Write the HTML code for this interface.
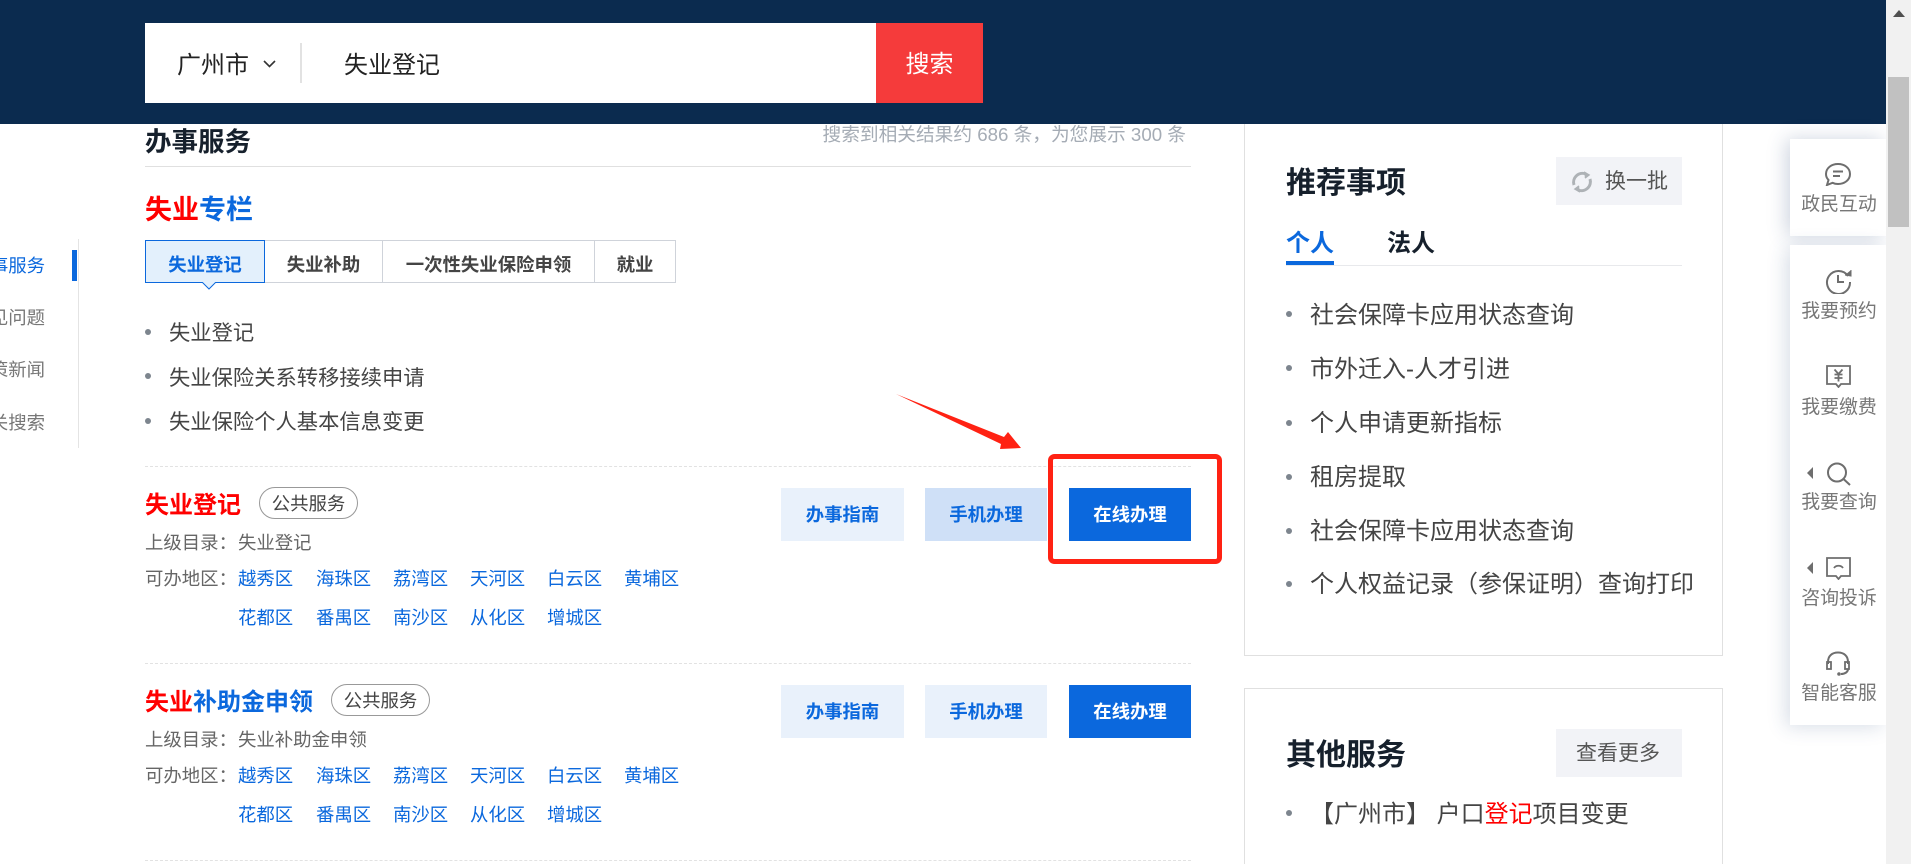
<!DOCTYPE html>
<html lang="zh"><head><meta charset="utf-8"><title>失业登记</title>
<style>
html,body{margin:0;padding:0;background:#fff;width:1911px;height:864px;overflow:hidden}
body{position:relative;font-family:"Liberation Sans","Noto Sans CJK SC",sans-serif}
.a{position:absolute;white-space:nowrap}
.t{position:absolute;white-space:nowrap;height:40px;line-height:40px}
.b{font-weight:700}
.r{color:#f00}.bl{color:#0b68dd}
.li{font-size:21.3px;color:#444}
.rl{font-size:24px;color:#444}
.dot{position:absolute;width:6px;height:6px;border-radius:50%;background:#7d858e}
.dash{position:absolute;left:145px;width:1046px;border-top:1px dashed #e2e2e2;height:0}
.m{font-size:18.4px;color:#666}
.l{font-size:18.4px;color:#0b68dd}
.pill{position:absolute;box-sizing:border-box;border:1px solid #999;border-radius:16px;height:32px;line-height:31px;text-align:center;font-size:18.4px;color:#444}
.btn{position:absolute;width:122px;height:53px;line-height:54px;text-align:center;font-size:18.4px;font-weight:700;background:#e9f1fb;color:#0b68dd}
.card{position:absolute;left:1244px;width:479px;box-sizing:border-box;border:1px solid #e0e0e0;background:#fff}
.gb{position:absolute;left:1556px;width:126px;height:48px;background:#f2f3f7;color:#555;font-size:21px;line-height:50px}
.tab{position:absolute;top:240px;height:43px;box-sizing:border-box;border:1px solid #cfd3da;border-left:0;line-height:47px;text-align:center;font-size:18.4px;font-weight:700;color:#444}
.st{position:absolute;left:1791px;width:96px;text-align:center;font-size:18.9px;color:#777;height:30px;line-height:30px}
.ic{position:absolute;left:1790px;width:96px}
</style></head><body>

<!-- left nav -->
<div class="a" style="left:78px;top:239px;width:1px;height:209px;background:#e4e4e4"></div>
<div class="a" style="left:72px;top:250px;width:5px;height:31px;background:#0b68dd"></div>
<div class="t" style="right:1866px;top:246px;font-size:18.4px;color:#0b68dd">办事服务</div>
<div class="t" style="right:1866px;top:298px;font-size:18.4px;color:#777">常见问题</div>
<div class="t" style="right:1866px;top:350px;font-size:18.4px;color:#777">政策新闻</div>
<div class="t" style="right:1866px;top:403px;font-size:18.4px;color:#777">相关搜索</div>

<!-- main -->
<div class="t" style="right:725px;top:115px;font-size:18.7px;color:#a5acb5">搜索到相关结果约 686 条，为您展示 300 条</div>
<div class="t b" style="left:145px;top:122px;font-size:26.5px;color:#16202c">办事服务</div>
<div class="a" style="left:145px;top:166px;width:1046px;height:1px;background:#e0e0e0"></div>
<div class="t b" style="left:145px;top:190px;font-size:27px;color:#0b68dd"><span class="r">失业</span>专栏</div>

<div class="tab" style="left:265px;width:118px">失业补助</div>
<div class="tab" style="left:383px;width:212px">一次性失业保险申领</div>
<div class="tab" style="left:595px;width:81px">就业</div>
<div class="a b" style="left:145px;top:240px;width:120px;height:43px;box-sizing:border-box;border:1px solid #0b68dd;background:#e3f0fc;color:#0b68dd;font-size:18.4px;text-align:center;line-height:47px">失业登记</div>
<svg class="a" style="left:201px;top:282px" width="16" height="8" viewBox="0 0 16 8"><path d="M1 0 L8 7 L15 0" fill="#e3f0fc" stroke="#0b68dd" stroke-width="1"/></svg>

<div class="dot" style="left:145px;top:329px"></div><div class="t li" style="left:169px;top:313px">失业登记</div>
<div class="dot" style="left:145px;top:373px"></div><div class="t li" style="left:169px;top:358px">失业保险关系转移接续申请</div>
<div class="dot" style="left:145px;top:418px"></div><div class="t li" style="left:169px;top:402px">失业保险个人基本信息变更</div>

<div class="dash" style="top:466px"></div>
<div class="t b r" style="left:145px;top:486px;font-size:24px">失业登记</div>
<div class="pill" style="left:259px;top:487px;width:99px">公共服务</div>
<div class="t m" style="left:145px;top:523px">上级目录：<span style="margin-left:1px">失业登记</span></div>
<div class="t m" style="left:145px;top:559px">可办地区：</div>
<div class="t l" style="left:238px;top:559px">越秀区</div><div class="t l" style="left:316px;top:559px">海珠区</div><div class="t l" style="left:393px;top:559px">荔湾区</div><div class="t l" style="left:470px;top:559px">天河区</div><div class="t l" style="left:547px;top:559px">白云区</div><div class="t l" style="left:624px;top:559px">黄埔区</div>
<div class="t l" style="left:238px;top:598px">花都区</div><div class="t l" style="left:316px;top:598px">番禺区</div><div class="t l" style="left:393px;top:598px">南沙区</div><div class="t l" style="left:470px;top:598px">从化区</div><div class="t l" style="left:547px;top:598px">增城区</div>
<div class="btn" style="left:781px;top:488px;width:123px">办事指南</div>
<div class="btn" style="left:925px;top:488px;background:#cfe0f7">手机办理</div>
<div class="btn" style="left:1069px;top:488px;background:#0b68dd;color:#fff">在线办理</div>

<div class="dash" style="top:663px"></div>
<div class="t b bl" style="left:145px;top:683px;font-size:24px"><span class="r">失业</span>补助金申领</div>
<div class="pill" style="left:331px;top:684px;width:99px">公共服务</div>
<div class="t m" style="left:145px;top:720px">上级目录：<span style="margin-left:1px">失业补助金申领</span></div>
<div class="t m" style="left:145px;top:756px">可办地区：</div>
<div class="t l" style="left:238px;top:756px">越秀区</div><div class="t l" style="left:316px;top:756px">海珠区</div><div class="t l" style="left:393px;top:756px">荔湾区</div><div class="t l" style="left:470px;top:756px">天河区</div><div class="t l" style="left:547px;top:756px">白云区</div><div class="t l" style="left:624px;top:756px">黄埔区</div>
<div class="t l" style="left:238px;top:795px">花都区</div><div class="t l" style="left:316px;top:795px">番禺区</div><div class="t l" style="left:393px;top:795px">南沙区</div><div class="t l" style="left:470px;top:795px">从化区</div><div class="t l" style="left:547px;top:795px">增城区</div>
<div class="btn" style="left:781px;top:685px;width:123px">办事指南</div>
<div class="btn" style="left:925px;top:685px">手机办理</div>
<div class="btn" style="left:1069px;top:685px;background:#0b68dd;color:#fff">在线办理</div>
<div class="dash" style="top:860px"></div>

<!-- annotation -->
<svg class="a" style="left:890px;top:390px" width="340" height="180" viewBox="890 390 340 180">
<path d="M896 394 L1004 437 L1008 432 L1021 448 L1000 449 L1001 444 Z" fill="#ff2213"/>
<rect x="1050.5" y="456.5" width="169" height="105" rx="4" fill="none" stroke="#ff2213" stroke-width="5"/>
</svg>

<!-- right cards -->
<div class="card" style="top:100px;height:556px"></div>
<div class="t b" style="left:1286px;top:164px;font-size:30px;color:#16202c">推荐事项</div>
<div class="gb" style="top:157px"><span class="a" style="left:49px;top:0">换一批</span>
<svg class="a" style="left:15px;top:14px" width="22" height="22" viewBox="0 0 22 22" fill="none" stroke="#aeb2b6" stroke-width="3"><path d="M3 14 A9 9 0 0 1 15 3"/><path d="M19 8 A9 9 0 0 1 7 19"/><path d="M13 1 L18 4 L14 7" stroke-width="1.5" fill="#aeb2b6"/><path d="M9 21 L4 18 L8 15" stroke-width="1.5" fill="#aeb2b6"/></svg></div>
<div class="t b bl" style="left:1286px;top:224px;font-size:24px">个人</div>
<div class="t b" style="left:1387px;top:224px;font-size:24px;color:#16202c">法人</div>
<div class="a" style="left:1286px;top:265px;width:396px;height:1px;background:#e8e9ec"></div>
<div class="a" style="left:1286px;top:261px;width:48px;height:4px;background:#0b68dd"></div>

<div class="dot" style="left:1286px;top:311px"></div><div class="t rl" style="left:1310px;top:296px">社会保障卡应用状态查询</div>
<div class="dot" style="left:1286px;top:365px"></div><div class="t rl" style="left:1310px;top:350px">市外迁入-人才引进</div>
<div class="dot" style="left:1286px;top:420px"></div><div class="t rl" style="left:1310px;top:404px">个人申请更新指标</div>
<div class="dot" style="left:1286px;top:474px"></div><div class="t rl" style="left:1310px;top:458px">租房提取</div>
<div class="dot" style="left:1286px;top:528px"></div><div class="t rl" style="left:1310px;top:512px">社会保障卡应用状态查询</div>
<div class="dot" style="left:1286px;top:581px"></div><div class="t rl" style="left:1310px;top:565px">个人权益记录（参保证明）查询打印</div>

<div class="card" style="top:688px;height:190px"></div>
<div class="t b" style="left:1286px;top:736px;font-size:30px;color:#16202c">其他服务</div>
<div class="gb" style="top:729px;text-align:center;text-indent:-2px">查看更多</div>
<div class="dot" style="left:1286px;top:810px"></div><div class="t rl" style="left:1310px;top:795px">【广州市】 户口<span class="r">登记</span>项目变更</div>

<!-- header -->
<div class="a" style="left:0;top:0;width:1886px;height:124px;background:#0b2b4f"></div>
<div class="a" style="left:145px;top:23px;width:731px;height:80px;background:#fff"></div>
<div class="a" style="left:876px;top:23px;width:107px;height:80px;background:#f53b3b;color:#fff;font-size:24px;line-height:84px;text-align:center">搜索</div>
<div class="t" style="left:177px;top:46px;font-size:24px;color:#222">广州市</div>
<svg class="a" style="left:263px;top:60px" width="13" height="8" viewBox="0 0 13 8"><path d="M1 1 L6.5 6.5 L12 1" fill="none" stroke="#333" stroke-width="1.6"/></svg>
<div class="a" style="left:300px;top:43px;width:2px;height:40px;background:#e2e2e2"></div>
<div class="t" style="left:344px;top:46px;font-size:24px;color:#222">失业登记</div>

<!-- scrollbar -->
<div class="a" style="left:1886px;top:0;width:25px;height:864px;background:#f1f1f1"></div>
<svg class="a" style="left:1893px;top:10px" width="12" height="7" viewBox="0 0 12 7"><path d="M6 0 L12 7 L0 7 Z" fill="#505050"/></svg>
<div class="a" style="left:1888px;top:77px;width:21px;height:150px;background:#c1c1c1"></div>

<!-- side widget -->
<div class="a" style="left:1790px;top:139px;width:96px;height:97px;background:#fff;box-shadow:-4px 0 18px rgba(40,70,120,.22)"></div>
<div class="a" style="left:1790px;top:245px;width:96px;height:480px;background:#fff;box-shadow:-4px 2px 18px rgba(40,70,120,.18)"></div>
<div class="a" style="left:1886px;top:124px;width:25px;height:740px;background:#f1f1f1"></div>
<div class="a" style="left:1888px;top:124px;width:21px;height:103px;background:#c1c1c1"></div>

<svg class="ic" style="top:162px" width="96" height="24" viewBox="0 0 96 24" fill="none" stroke="#6e6e6e" stroke-width="2"><path d="M48 2 C54.5 2 60 6 60 12 C60 18 54.5 22 48 22 C46 22 44 21.5 42.5 20.8 L37 23 L38.5 18 C36.8 16.3 36 14.3 36 12 C36 6 41.5 2 48 2 Z"/><path d="M43 9.5 H53 M43 14 H50"/></svg>
<div class="st" style="top:190px">政民互动</div>

<svg class="ic" style="top:268px" width="96" height="26" viewBox="0 0 96 26" fill="none" stroke="#6e6e6e" stroke-width="2"><path d="M58 8 A11.5 11.5 0 1 0 60 14"/><path d="M55 7 L61 8 L61 2" fill="#6e6e6e" stroke-width="1"/><path d="M48 7 V14 H54"/></svg>
<div class="st" style="top:297px">我要预约</div>

<svg class="ic" style="top:365px" width="96" height="23" viewBox="0 0 96 23" fill="none" stroke="#6e6e6e" stroke-width="1.8"><path d="M37 1 H60 V19 H51 L48.5 22 L46 19 H37 Z"/><path d="M44.5 4.5 L48.5 9 L52.5 4.5 M44.5 9.5 H52.5 M44.5 13 H52.5 M48.5 9 V16.5"/></svg>
<div class="st" style="top:393px">我要缴费</div>

<svg class="a" style="left:1807px;top:467px" width="6" height="12" viewBox="0 0 6 12"><path d="M6 0 V12 L0 6 Z" fill="#6e6e6e"/></svg>
<svg class="ic" style="top:462px" width="96" height="24" viewBox="0 0 96 24" fill="none" stroke="#6e6e6e" stroke-width="2"><circle cx="47" cy="10.5" r="9"/><path d="M53.5 17 L60 23"/></svg>
<div class="st" style="top:488px">我要查询</div>

<svg class="a" style="left:1807px;top:562px" width="6" height="12" viewBox="0 0 6 12"><path d="M6 0 V12 L0 6 Z" fill="#6e6e6e"/></svg>
<svg class="ic" style="top:557px" width="96" height="23" viewBox="0 0 96 23" fill="none" stroke="#6e6e6e" stroke-width="1.8"><path d="M37 1 H60 V19 H51 L48.5 22 L46 19 H37 Z"/><path d="M44 11 C46 8 51 8 53 11"/></svg>
<div class="st" style="top:584px">咨询投诉</div>

<svg class="ic" style="top:651px" width="96" height="26" viewBox="0 0 96 26" fill="none" stroke="#6e6e6e" stroke-width="2"><path d="M38 13 V11 C38 5 42 1.5 48 1.5 C54 1.5 58 5 58 11 V13"/><rect x="37" y="11" width="4" height="7" stroke-width="1.8"/><rect x="55" y="11" width="4" height="7" stroke-width="1.8"/><path d="M58 18 C58 21 55 23 51 23"/><circle cx="49" cy="23" r="1.8" fill="#6e6e6e" stroke="none"/></svg>
<div class="st" style="top:679px">智能客服</div>

</body></html>
